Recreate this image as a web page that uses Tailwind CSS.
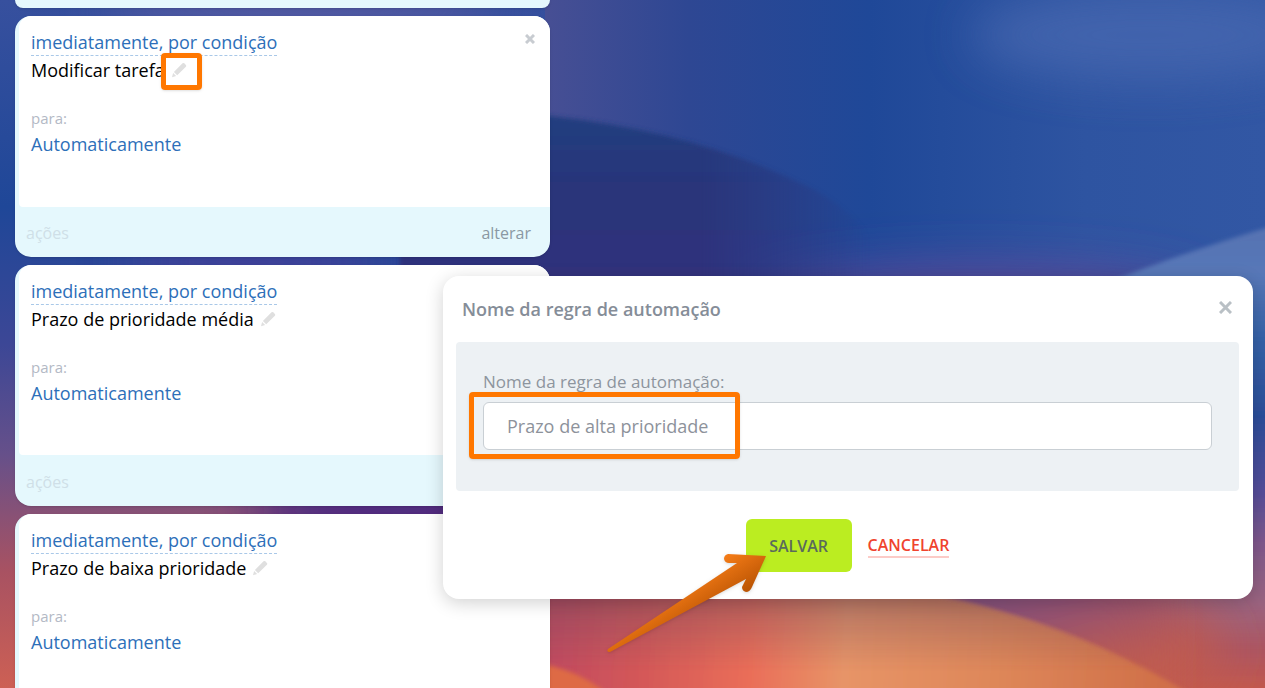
<!DOCTYPE html>
<html lang="pt-BR">
<head>
    <meta charset="UTF-8">
    <meta name="viewport" content="width=device-width, initial-scale=1.0">
    <title>Regras de automação</title>
    <script src="https://cdn.jsdelivr.net/npm/@tailwindcss/browser@4"></script>
</head>
<body class="relative h-screen overflow-hidden bg-[#2b4a96] font-['Open_Sans',sans-serif] text-lg leading-7 text-black">
    <!-- Wallpaper -->
    <svg class="absolute inset-0 -z-10 h-full w-full" viewBox="0 0 1265 688" preserveAspectRatio="xMidYMid slice" aria-hidden="true">
        <defs>
            <linearGradient id="left" x1="0" y1="0" x2="0" y2="1">
                <stop offset="0" stop-color="#37509e"/>
                <stop offset=".3" stop-color="#1f4798"/>
                <stop offset=".5" stop-color="#3c4796"/>
                <stop offset=".66" stop-color="#66508a"/>
                <stop offset=".83" stop-color="#a85262"/>
                <stop offset="1" stop-color="#cd6054"/>
            </linearGradient>
            <linearGradient id="top" x1="0" y1="0" x2="1" y2="0">
                <stop offset="0" stop-color="#474f94"/>
                <stop offset=".2" stop-color="#2e4793"/>
                <stop offset=".45" stop-color="#1f4898"/>
                <stop offset=".75" stop-color="#2e54a1"/>
                <stop offset="1" stop-color="#3257a4"/>
            </linearGradient>
            <linearGradient id="right" x1="0" y1="236" x2="0" y2="688" gradientUnits="userSpaceOnUse">
                <stop offset="0" stop-color="#5673b3"/>
                <stop offset=".08" stop-color="#5878b8"/>
                <stop offset=".23" stop-color="#3562a8"/>
                <stop offset=".4" stop-color="#2c4e9a"/>
                <stop offset=".56" stop-color="#534d9a"/>
                <stop offset=".68" stop-color="#80588c"/>
                <stop offset=".81" stop-color="#9a6480"/>
                <stop offset=".92" stop-color="#ad5560"/>
                <stop offset="1" stop-color="#c2594e"/>
            </linearGradient>
            <linearGradient id="dark" x1="0" y1="0" x2="0" y2="1">
                <stop offset="0" stop-color="#213f80"/>
                <stop offset=".35" stop-color="#29357a"/>
                <stop offset="1" stop-color="#34317c"/>
            </linearGradient>
            <linearGradient id="fade" x1="700" y1="0" x2="870" y2="0" gradientUnits="userSpaceOnUse">
                <stop offset="0" stop-color="#fff"/>
                <stop offset="1" stop-color="#fff" stop-opacity="0"/>
            </linearGradient>
            <mask id="darkMask" maskUnits="userSpaceOnUse" x="0" y="0" width="1265" height="688">
                <rect width="1265" height="688" fill="url(#fade)"/>
            </mask>
            <linearGradient id="sand" x1="540" y1="0" x2="1200" y2="40" gradientUnits="userSpaceOnUse">
                <stop offset="0" stop-color="#b84463"/>
                <stop offset=".2" stop-color="#d25659"/>
                <stop offset=".38" stop-color="#ea6e59"/>
                <stop offset=".52" stop-color="#e79467"/>
                <stop offset=".75" stop-color="#de8759"/>
                <stop offset="1" stop-color="#d07049"/>
            </linearGradient>
            <linearGradient id="dusk" x1="1000" y1="590" x2="1030" y2="690" gradientUnits="userSpaceOnUse">
                <stop offset="0" stop-color="#7d4f7c"/>
                <stop offset=".3" stop-color="#8c4f74"/>
                <stop offset="1" stop-color="#c25c4e"/>
            </linearGradient>
            <linearGradient id="shade" x1="0" y1="590" x2="0" y2="670" gradientUnits="userSpaceOnUse">
                <stop offset="0" stop-color="#6f4a5c" stop-opacity=".5"/>
                <stop offset="1" stop-color="#6f4a5c" stop-opacity="0"/>
            </linearGradient>
            <filter id="soft" x="-20%" y="-20%" width="140%" height="140%"><feGaussianBlur stdDeviation="2"/></filter>
            <filter id="haze" x="-400" y="-400" width="2000" height="1400" filterUnits="userSpaceOnUse"><feGaussianBlur stdDeviation="24"/></filter>
        </defs>
        <rect width="560" height="688" fill="url(#left)"/>
        <ellipse cx="300" cy="8" rx="200" ry="22" fill="#6d63a6" opacity=".7" filter="url(#haze)"/>
        <ellipse cx="250" cy="262" rx="130" ry="30" fill="#46409a" opacity=".8" filter="url(#haze)"/>
        <ellipse cx="400" cy="510" rx="150" ry="40" fill="#4d2c80" filter="url(#haze)"/>
        <rect x="545" width="720" height="688" fill="url(#top)"/>
        <ellipse cx="1150" cy="35" rx="180" ry="45" fill="#4767b0" opacity=".8" filter="url(#haze)"/>
        <ellipse cx="980" cy="300" rx="230" ry="34" fill="#5c489a" filter="url(#haze)"/>
        <g mask="url(#darkMask)">
            <path d="M400 112Q480 110 550 116Q700 132 815 190Q900 240 900 320H400Z" fill="url(#dark)" filter="url(#soft)"/>
        </g>
        <path d="M1090 290Q1180 252 1300 218V720H1090Z" fill="url(#right)" filter="url(#soft)"/>
        <ellipse cx="1060" cy="650" rx="160" ry="70" fill="url(#dusk)" filter="url(#haze)"/>
        <path d="M900 560H1150V720H900Z" fill="url(#dusk)" filter="url(#haze)"/>
        <path d="M500 560H840L940 597Q1080 625 1200 700H500Z" fill="url(#sand)" filter="url(#soft)"/>
        <path d="M500 560H840L940 597Q1080 625 1200 700H500Z" fill="url(#shade)" filter="url(#soft)"/>
        <path d="M530 662Q580 668 615 700H530Z" fill="#de6b44" filter="url(#soft)"/>
    </svg>

    <main class="flex w-[565px] flex-col gap-2 px-[15px]">
        <div class="h-2 rounded-b-2xl bg-[#e5f8fd] shadow"></div>

        <article class="rounded-2xl bg-[#e5f8fd] pl-1 shadow">
            <div class="relative h-[191px] rounded-tl-xl rounded-tr-2xl rounded-bl bg-white px-3 pt-3">
                <button class="absolute top-[18px] right-[15px]" aria-label="Fechar">
                    <svg class="size-[10px]" viewBox="0 0 10 10" fill="none" stroke="#c8ccd1" stroke-width="3"><path d="M1 1L9 9M9 1L1 9"/></svg>
                </button>
                <a href="#" class="inline-block border-b border-dashed border-[#a9c8e8] leading-[26px] text-[#2d6fb9]">imediatamente, por condição</a>
                <div class="flex items-center gap-1.5">
                    <span>Modificar tarefa</span>
                    <button class="relative" aria-label="Editar nome">
                        <svg class="size-4" viewBox="0 0 16 16" fill="#dfdfdf"><path d="M11.500 1.300q.9-.8 1.800 0l1.600 1.600q.8.900 0 1.800L6.200 13.200 2.900 9.900ZM2.100 11L5.100 14 1 15.300Z"/></svg>
                        <span class="absolute -top-[9px] -left-[10px] h-[37px] w-[41px] rounded-sm border-[5px] border-[#ff7700] shadow"></span>
                    </button>
                </div>
                <p class="pt-[22px] text-[15px] leading-6 text-[#b3b9c5]">para:</p>
                <a href="#" class="text-[#2d6fb9]">Automaticamente</a>
            </div>
            <div class="flex h-[50px] items-center justify-between pt-0.5 pr-[19px] pl-[7px] text-base">
                <span class="text-[#cfdfe7]">ações</span>
                <a href="#" class="text-[#8a98a3]">alterar</a>
            </div>
        </article>

        <article class="rounded-2xl bg-[#e5f8fd] pl-1 shadow">
            <div class="h-[190px] rounded-tl-xl rounded-tr-2xl rounded-bl bg-white px-3 pt-3">
                <a href="#" class="inline-block border-b border-dashed border-[#a9c8e8] leading-[26px] text-[#2d6fb9]">imediatamente, por condição</a>
                <div class="flex items-center gap-1.5">
                    <span>Prazo de prioridade média</span>
                    <button aria-label="Editar nome">
                        <svg class="size-4" viewBox="0 0 16 16" fill="#dfdfdf"><path d="M11.500 1.300q.9-.8 1.800 0l1.600 1.600q.8.900 0 1.800L6.200 13.200 2.900 9.900ZM2.100 11L5.100 14 1 15.300Z"/></svg>
                    </button>
                </div>
                <p class="pt-[22px] text-[15px] leading-6 text-[#b3b9c5]">para:</p>
                <a href="#" class="text-[#2d6fb9]">Automaticamente</a>
            </div>
            <div class="flex h-[51px] items-center pt-0.5 pl-[7px] text-base">
                <span class="text-[#cfdfe7]">ações</span>
            </div>
        </article>

        <article class="rounded-2xl bg-[#e5f8fd] pl-1 shadow">
            <div class="h-[191px] rounded-tl-xl rounded-tr-2xl rounded-bl bg-white px-3 pt-3">
                <a href="#" class="inline-block border-b border-dashed border-[#a9c8e8] leading-[26px] text-[#2d6fb9]">imediatamente, por condição</a>
                <div class="flex items-center gap-1.5">
                    <span>Prazo de baixa prioridade</span>
                    <button aria-label="Editar nome">
                        <svg class="size-4" viewBox="0 0 16 16" fill="#dfdfdf"><path d="M11.500 1.300q.9-.8 1.800 0l1.600 1.600q.8.900 0 1.800L6.200 13.200 2.900 9.900ZM2.100 11L5.100 14 1 15.300Z"/></svg>
                    </button>
                </div>
                <p class="pt-[22px] text-[15px] leading-6 text-[#b3b9c5]">para:</p>
                <a href="#" class="text-[#2d6fb9]">Automaticamente</a>
            </div>
        </article>
    </main>

    <!-- Rename dialog -->
    <form role="dialog" aria-labelledby="dialogTitle" class="absolute top-[276px] right-3 left-[443px] rounded-2xl bg-white pr-[14px] pb-[27px] pl-[13px] shadow-[0_4px_18px_rgba(0,0,0,0.18)]">
        <div class="flex h-[66px] items-center justify-between px-1.5">
            <h2 id="dialogTitle" class="font-semibold text-[#858d98]">Nome da regra de automação</h2>
            <button type="button" class="pr-px pb-1" aria-label="Fechar">
                <svg class="size-[13px]" viewBox="0 0 13 13" fill="none" stroke="#b9c0c5" stroke-width="3"><path d="M1 1L12 12M12 1L1 12"/></svg>
            </button>
        </div>
        <div class="h-[149px] rounded bg-[#edf1f4] px-[27px] pt-7">
            <label for="ruleName" class="block h-8 text-[17px] leading-6 text-[#8d959e]">Nome da regra de automação:</label>
            <div class="relative">
                <input id="ruleName" type="text" value="Prazo de alta prioridade" class="block h-12 w-full rounded-md border border-[#c9cfd4] bg-white px-[23px] text-[#8d929b] outline-none">
                <span class="pointer-events-none absolute -top-[10px] -left-[14px] h-[67px] w-[271px] rounded-sm border-[5px] border-[#ff7700] shadow"></span>
            </div>
        </div>
        <div class="flex items-center justify-center gap-4 pt-7">
            <div class="relative">
                <button type="submit" class="block h-[53px] w-[106px] rounded-md bg-[#bbed21] text-base font-semibold text-[#5a6a5c]">SALVAR</button>
                <svg class="pointer-events-none absolute top-[29px] -left-[144px] h-[110px] w-[170px] drop-shadow" viewBox="0 0 170 110">
                    <defs>
                        <linearGradient id="arrow" x1="115" y1="10" x2="138" y2="46" gradientUnits="userSpaceOnUse">
                            <stop offset="0" stop-color="#f87e18"/>
                            <stop offset="1" stop-color="#bd5604"/>
                        </linearGradient>
                    </defs>
                    <path d="M164 8L126 6Q122 7 122 11Q123 15 127 15L135 15L6 101Q4 104 8 104L144 31L140 39Q140 43 144 44Q148 44 150 39Z" fill="url(#arrow)"/>
                </svg>
            </div>
            <button type="button" class="border-b-2 border-[#fccbc7] text-base leading-[22px] font-semibold text-[#f0432e]">CANCELAR</button>
        </div>
    </form>
</body>
</html>
